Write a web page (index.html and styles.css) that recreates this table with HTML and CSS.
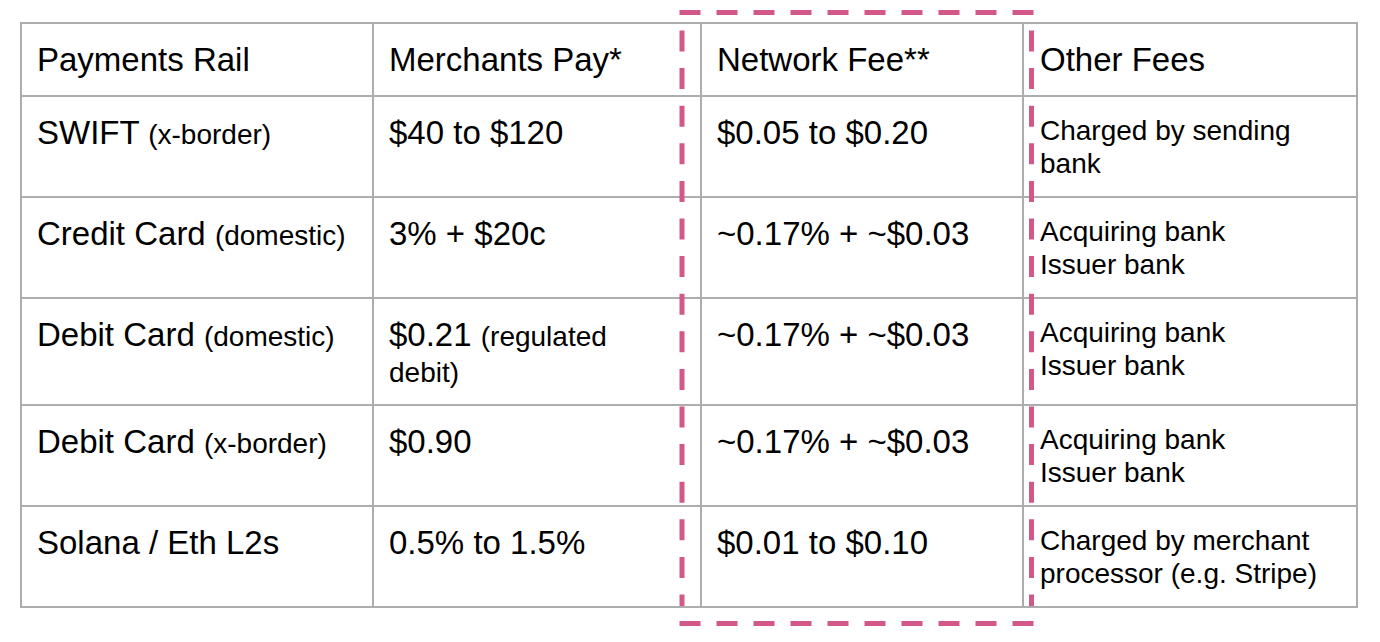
FILE: index.html
```html
<!DOCTYPE html>
<html>
<head>
<meta charset="utf-8">
<link rel="stylesheet" href="styles.css">
</head>
<body>
<div class="page">
  <table class="fees">
    <colgroup>
      <col class="c1"><col class="c2"><col class="c3"><col class="c4">
    </colgroup>
    <tr class="head">
      <td>Payments Rail</td>
      <td>Merchants Pay*</td>
      <td>Network Fee**</td>
      <td class="other">Other Fees</td>
    </tr>
    <tr class="row">
      <td>SWIFT <span class="sm">(x-border)</span></td>
      <td>$40 to $120</td>
      <td>$0.05 to $0.20</td>
      <td class="other sm-cell">Charged by sending bank</td>
    </tr>
    <tr class="row">
      <td>Credit Card <span class="sm">(domestic)</span></td>
      <td>3% + $20c</td>
      <td>~0.17% + ~$0.03</td>
      <td class="other sm-cell">Acquiring bank<br>Issuer bank</td>
    </tr>
    <tr class="row">
      <td>Debit Card <span class="sm">(domestic)</span></td>
      <td>$0.21 <span class="sm">(regulated<br>debit)</span></td>
      <td>~0.17% + ~$0.03</td>
      <td class="other sm-cell">Acquiring bank<br>Issuer bank</td>
    </tr>
    <tr class="row">
      <td>Debit Card <span class="sm">(x-border)</span></td>
      <td>$0.90</td>
      <td>~0.17% + ~$0.03</td>
      <td class="other sm-cell">Acquiring bank<br>Issuer bank</td>
    </tr>
    <tr class="row">
      <td>Solana / Eth L2s</td>
      <td>0.5% to 1.5%</td>
      <td>$0.01 to $0.10</td>
      <td class="other sm-cell">Charged by merchant processor (e.g. Stripe)</td>
    </tr>
  </table>
  <svg class="highlight" width="1380" height="642" viewBox="0 0 1380 642" aria-hidden="true">
    <g stroke="#d3588a" stroke-width="5" fill="none">
      <path d="M679.5 12.5 H1033.5" stroke-dasharray="21 16"/>
      <path d="M679.5 623.5 H1033.5" stroke-dasharray="21 16"/>
      <path d="M682 30.5 V606" stroke-dasharray="21 16.6"/>
      <path d="M1031.5 30.5 V606" stroke-dasharray="21 16.6"/>
    </g>
  </svg>
</div>
</body>
</html>
```

FILE: styles.css
```css
html, body {
  margin: 0;
  padding: 0;
  background: #ffffff;
}

.page {
  position: relative;
  width: 1380px;
  height: 642px;
  padding: 22px 0 0 20px;
  box-sizing: border-box;
  font-family: "Liberation Sans", Arial, sans-serif;
  color: #000;
}

.fees {
  border-collapse: collapse;
  table-layout: fixed;
  width: 1336px;
}

.c1 { width: 352px; }
.c2 { width: 328px; }
.c3 { width: 322px; }
.c4 { width: 334px; }

.fees td {
  border: 2px solid #adadad;
  vertical-align: top;
  padding: 19px 14px 14px 15px;
  font-size: 33px;
  line-height: 34px;
}

.fees td.other {
  padding-left: 16px;
}

.fees td.sm-cell {
  font-size: 28px;
  line-height: 33px;
  padding-top: 17px;
}

.sm {
  font-size: 28px;
}

.head { height: 73px; }
.row { height: 101px; }

.highlight {
  position: absolute;
  left: 0;
  top: 0;
  pointer-events: none;
}
```
